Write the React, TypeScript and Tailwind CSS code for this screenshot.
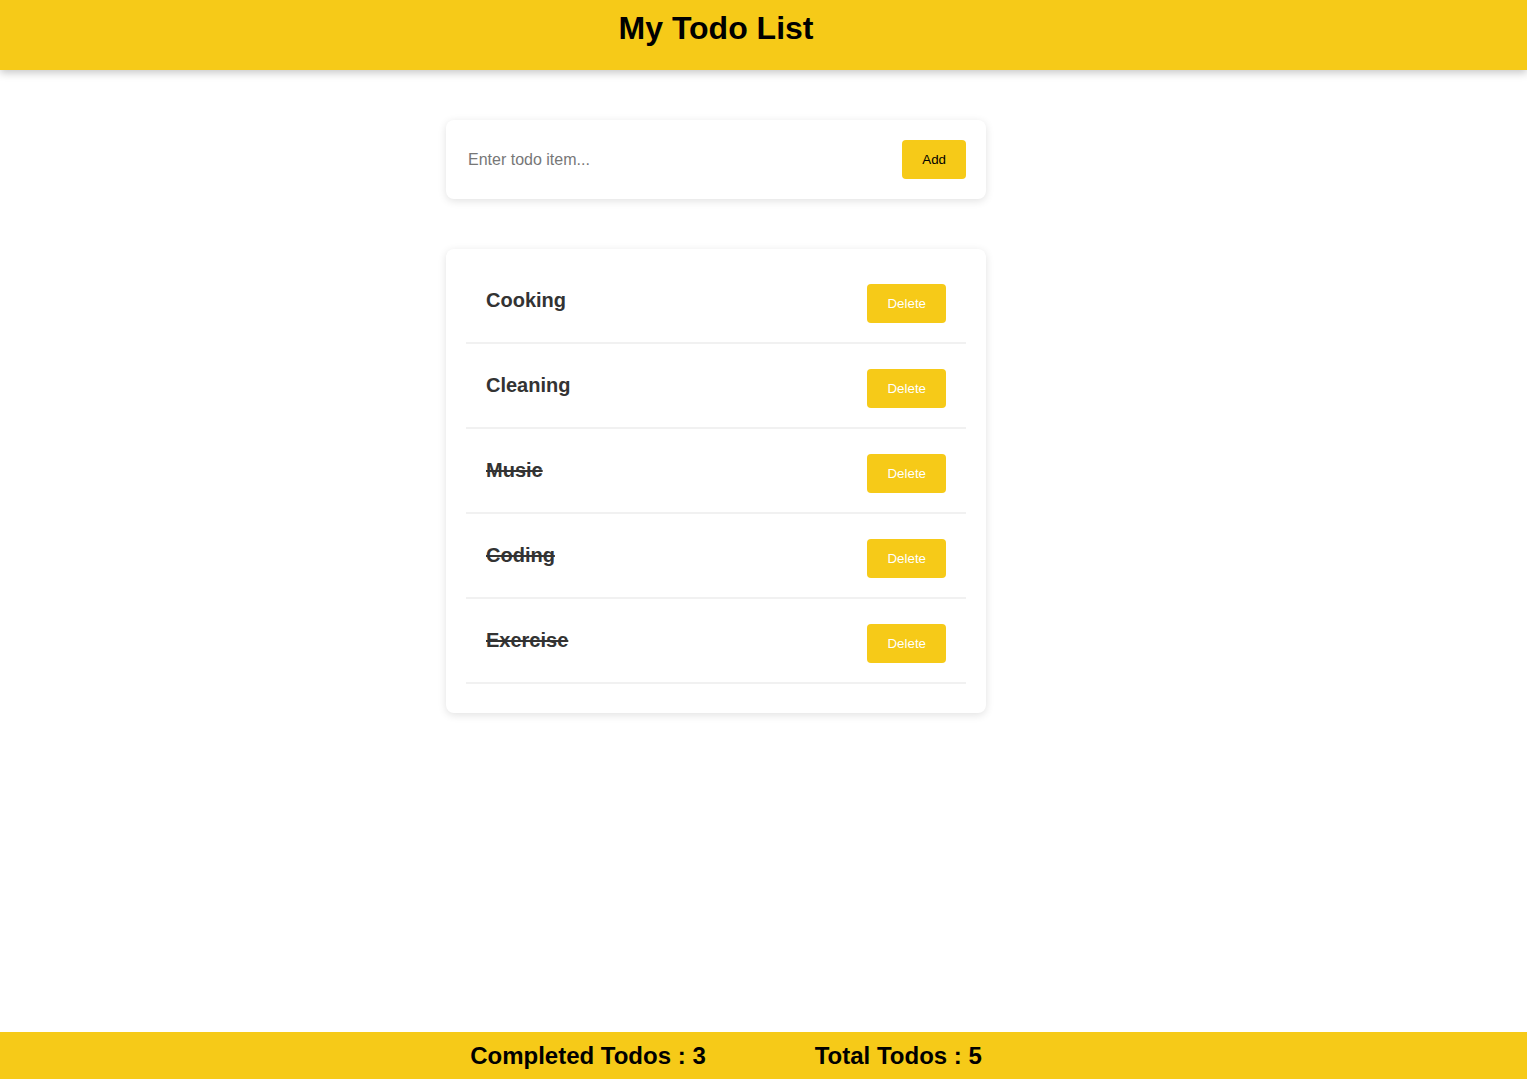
import { useState } from 'react'

interface Todo {
  id: number
  text: string
  done: boolean
}

const initialTodos: Todo[] = [
  { id: 1, text: 'Cooking', done: false },
  { id: 2, text: 'Cleaning', done: false },
  { id: 3, text: 'Music', done: true },
  { id: 4, text: 'Coding', done: true },
  { id: 5, text: 'Exercise', done: true },
]

function TodoRow({ todo, onToggle, onDelete }: { todo: Todo; onToggle: () => void; onDelete: () => void }) {
  return (
    <li className="flex items-center justify-between px-[20px] pt-[25px] pb-[19px] border-b-2 border-[#f1f1f1]">
      <span
        onClick={onToggle}
        className={`pb-[8px] text-[20px] font-bold leading-normal text-[#333] cursor-pointer ${todo.done ? 'line-through' : ''}`}
      >
        {todo.text}
      </span>
      <button
        onClick={onDelete}
        className="h-[39px] px-[20px] rounded-[4px] bg-[#f6ca18] text-white text-[13.33px] leading-normal"
      >
        Delete
      </button>
    </li>
  )
}

export default function App() {
  const [todos, setTodos] = useState<Todo[]>(initialTodos)
  const [input, setInput] = useState('')

  const completed = todos.filter((t) => t.done).length

  const addTodo = () => {
    if (!input.trim()) return
    setTodos([...todos, { id: Date.now(), text: input.trim(), done: false }])
    setInput('')
  }

  return (
    <div className="min-h-screen flex flex-col bg-white font-['Liberation_Sans',Arial,sans-serif]">
      <header className="h-[70px] shrink-0 bg-[#f6ca18] shadow-[0_3px_8px_rgba(0,0,0,0.22)] flex justify-center pr-[95px] pt-[4px]">
        <h1 className="text-[32px] font-bold leading-normal text-black">My Todo List</h1>
      </header>

      <main className="flex flex-col items-center pr-[95px] pt-[50px]">
        {/* Input card */}
        <div className="w-[540px] h-[79px] rounded-[8px] bg-white shadow-[0_2px_8px_rgba(0,0,0,0.12)] flex items-center justify-between px-[20px]">
          <input
            value={input}
            onChange={(e) => setInput(e.target.value)}
            onKeyDown={(e) => e.key === 'Enter' && addTodo()}
            placeholder="Enter todo item..."
            className="flex-1 pl-[2px] text-[16px] text-[#333] placeholder:text-[#777] outline-none bg-transparent"
          />
          <button
            onClick={addTodo}
            className="h-[39px] px-[20px] rounded-[4px] bg-[#f6ca18] text-black text-[13.33px] leading-normal"
          >
            Add
          </button>
        </div>

        {/* List card */}
        <ul className="mt-[50px] w-[540px] rounded-[8px] bg-white shadow-[0_2px_8px_rgba(0,0,0,0.12)] px-[20px] pt-[10px] pb-[29px]">
          {todos.map((todo) => (
            <TodoRow
              key={todo.id}
              todo={todo}
              onToggle={() => setTodos(todos.map((t) => (t.id === todo.id ? { ...t, done: !t.done } : t)))}
              onDelete={() => setTodos(todos.filter((t) => t.id !== todo.id))}
            />
          ))}
        </ul>
      </main>

      <footer className="mt-auto h-[47px] shrink-0 bg-[#f6ca18] flex items-center justify-center gap-[109px] pr-[75px]">
        <h2 className="text-[24px] font-bold leading-normal text-black">Completed Todos : {completed}</h2>
        <h2 className="text-[24px] font-bold leading-normal text-black">Total Todos : {todos.length}</h2>
      </footer>
    </div>
  )
}
